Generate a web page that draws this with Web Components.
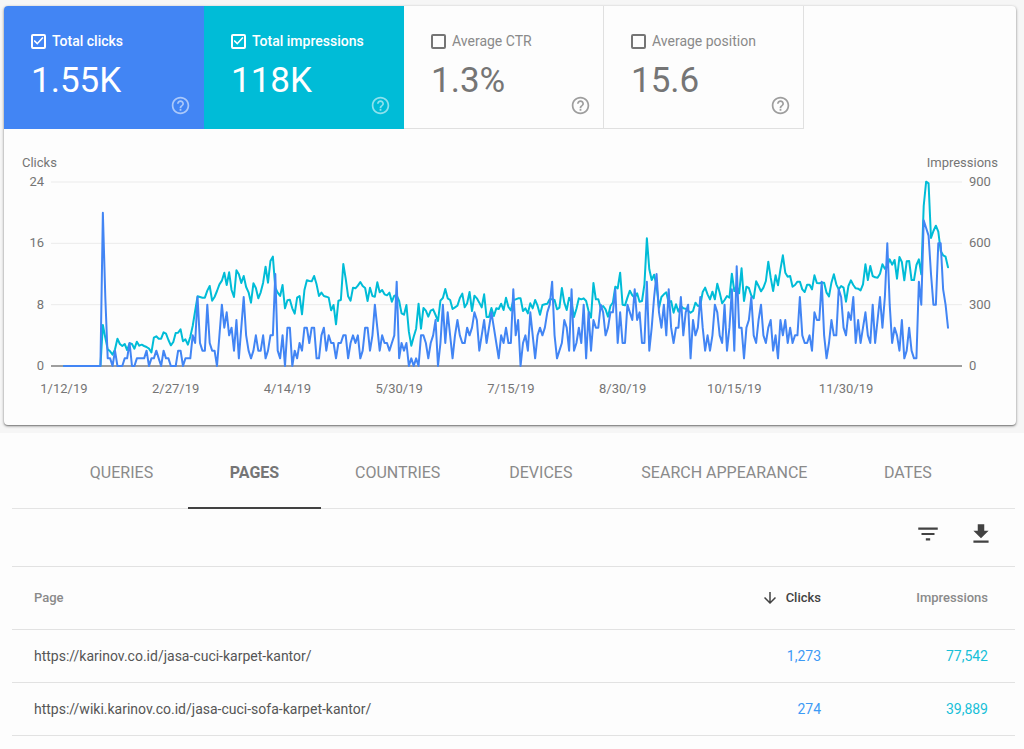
<!DOCTYPE html>
<html lang="en">
<head>
<meta charset="utf-8">
<meta name="viewport" content="width=device-width, initial-scale=1">
<title>Performance on Search results</title>
<style>
  body { margin: 0; background: #fdfdfd; color: #757575; font-family: Roboto, "Liberation Sans", sans-serif; }
</style>
</head>
<body>
<performance-page></performance-page>

<template id="t-metric">
  <style>
    :host { display: block; box-sizing: border-box; position: relative; height: 123px; padding: 25px 12px 0 27px;
      color: #757575; border: solid #e0e0e0; border-width: 0 1px 1px 0; --label: #8a8a8a; --help: #9e9e9e; --weight: 400; }
    :host([tone]) { color: #fff; --label: #fff; --help: rgba(255,255,255,.55); --weight: 500; }
    :host([tone="clicks"]) { background: #4285f4; border-color: #4285f4; }
    :host([tone="impressions"]) { background: #00bcd7; border-color: #00bcd7; }
    label { display: flex; align-items: center; gap: 6px; height: 20px; font-size: 14px; line-height: 20px; font-weight: var(--weight); color: var(--label); }
    input { appearance: none; box-sizing: border-box; width: 15px; height: 15px; margin: 0; border: 2px solid #757575; border-radius: 2px; display: grid; place-items: center; }
    :host([tone]) input { border-color: #fff; }
    input:checked::before { content: ""; width: 10px; height: 8px; background: #fff;
      clip-path: polygon(0 50%, 12% 36%, 38% 68%, 88% 0, 100% 14%, 38% 98%); }
    .value { display: block; margin-top: 8px; font-size: 35px; line-height: 44px; }
    button { position: absolute; right: 12px; bottom: 12px; width: 21px; height: 21px; padding: 0; border: 0; background: none; color: var(--help); }
    svg { display: block; width: 21px; height: 21px; fill: currentColor; }
  </style>
  <label><input type="checkbox"><span><slot name="label"></slot></span></label>
  <span class="value"><slot></slot></span>
  <button type="button" aria-label="Help"><svg viewBox="0 0 24 24"><path d="M11 18h2v-2h-2v2zm1-16C6.480 2 2 6.480 2 12s4.480 10 10 10 10-4.480 10-10S17.520 2 12 2zm0 18c-4.410 0-8-3.590-8-8s3.590-8 8-8 8 3.590 8 8-3.590 8-8 8zm0-14c-2.210 0-4 1.790-4 4h2c0-1.100.9-2 2-2s2 .9 2 2c0 2-3 1.750-3 5h2c0-2.250 3-2.500 3-5 0-2.210-1.790-4-4-4z"/></svg></button>
</template>

<template id="t-chart">
  <style>
    :host { display: block; padding: 26px 0 28px; font-size: 13px; line-height: 16px; }
    .titles { display: flex; justify-content: space-between; padding: 0 18px; }
    .plot { display: grid; grid-template-columns: 40px 1fr 47px; gap: 7px; margin-top: 3px; }
    .axis { display: flex; flex-direction: column; justify-content: space-between; height: 200px; }
    .left { text-align: right; }
    svg { display: block; width: 100%; height: 184px; margin-top: 8px; overflow: visible; }
    svg * { vector-effect: non-scaling-stroke; fill: none; }
    .grid { stroke: #ebebeb; stroke-width: 1px; }
    .base { stroke: #9e9e9e; stroke-width: 2px; }
    .series { stroke-width: 2px; stroke-linejoin: round; stroke-linecap: round; }
    .dates { display: grid; grid-template-columns: repeat(8, 1fr); margin: 7px 114px 0 4px; text-align: center; }
  </style>
  <div class="titles"><span>Clicks</span><span>Impressions</span></div>
  <div class="plot">
    <div class="axis left"><span>24</span><span>16</span><span>8</span><span>0</span></div>
    <svg viewBox="0 0 2733 552" preserveAspectRatio="none" role="img" aria-label="Clicks and impressions per day">
      <path class="grid" d="M0 0H2733M0 184H2733M0 368H2733"/>
      <path class="base" d="M0 552H2733"/>
      <polyline class="series" id="impressions" stroke="#00bcd7"/>
      <polyline class="series" id="clicks" stroke="#4285f4"/>
    </svg>
    <div class="axis"><span>900</span><span>600</span><span>300</span><span>0</span></div>
  </div>
  <div class="dates"></div>
</template>

<template id="t-tabs">
  <style>
    :host { display: block; margin: 0 9px 0 12px; border-bottom: 1px solid #e4e4e4; padding-left: 43px; }
    div { display: flex; }
    button { box-sizing: border-box; height: 76px; min-width: 133px; padding: 6px 34px 0; margin-bottom: -1px; border: 0; border-bottom: 2px solid transparent;
      background: none; font: 400 16px/20px Roboto, "Liberation Sans", sans-serif; color: #8a8a8a; white-space: nowrap; }
    button[aria-selected="true"] { font-weight: 700; color: #757575; border-color: #424242; }
  </style>
  <div role="tablist"></div>
</template>

<template id="t-toolbar">
  <style>
    :host { display: flex; justify-content: flex-end; align-items: center; gap: 27px; height: 57px; box-sizing: border-box; margin: 0 9px 0 12px; padding: 0 21px 8px; }
    button { width: 26px; height: 26px; padding: 0; border: 0; background: none; color: #424242; }
    svg { display: block; width: 26px; height: 26px; fill: currentColor; }
  </style>
  <button type="button" aria-label="Filter rows"><svg viewBox="0 0 24 24"><path d="M10 18h4v-2h-4v2zM3 6v2h18V6H3zm3 7h12v-2H6v2z"/></svg></button>
  <button type="button" aria-label="Download"><svg viewBox="0 0 24 24"><path d="M19 9h-4V3H9v6H5l7 7 7-7zM5 18v2h14v-2H5z"/></svg></button>
</template>

<template id="t-table">
  <style>
    :host { display: block; margin: 0 9px 0 12px; }
    table { width: 100%; border-collapse: collapse; font-size: 14px; line-height: 20px; table-layout: fixed; }
    tr { border: solid #e2e2e2; border-width: 1px 0; }
    th, td { padding: 0 27px 0 22px; text-align: right; font-weight: 400; box-sizing: border-box; }
    th { height: 63px; font-size: 13px; font-weight: 500; color: #8a8a8a; }
    td { height: 53px; }
    th:first-child, td:first-child { text-align: left; }
    col.clicks { width: 186px; } col.impressions { width: 167px; }
    button { display: inline-flex; align-items: center; gap: 7px; padding: 0; border: 0; background: none; font: inherit; color: #424242; vertical-align: middle; }
    svg { width: 18px; height: 18px; fill: currentColor; }
    a { color: #555; text-decoration: none; }
    .c { color: #3d9af5; } .i { color: #17c0d8; }
  </style>
  <table>
    <colgroup><col><col class="clicks"><col class="impressions"></colgroup>
    <thead><tr><th scope="col">Page</th>
      <th scope="col" aria-sort="descending"><button type="button"><svg viewBox="0 0 24 24" aria-hidden="true"><path d="M20 12l-1.410-1.410L13 16.170V4h-2v12.170l-5.580-5.590L4 12l8 8 8-8z"/></svg>Clicks</button></th>
      <th scope="col">Impressions</th></tr></thead>
    <tbody></tbody>
  </table>
</template>

<template id="t-page">
  <style>
    :host { display: block; }
    .band { background: #f6f6f6; padding: 6px 8px 8px 4px; }
    .card { background: #fdfdfd; border-radius: 4px; box-shadow: 0 1px 3px rgba(0,0,0,.45), 0 1px 1px rgba(0,0,0,.2); overflow: hidden; }
    .metrics { display: grid; grid-template-columns: repeat(4, minmax(0, 200px)); }
  </style>
  <div class="band">
    <div class="card">
      <div class="metrics">
        <metric-tile tone="clicks" checked><span slot="label">Total clicks</span>1.55K</metric-tile>
        <metric-tile tone="impressions" checked><span slot="label">Total impressions</span>118K</metric-tile>
        <metric-tile><span slot="label">Average CTR</span>1.3%</metric-tile>
        <metric-tile><span slot="label">Average position</span>15.6</metric-tile>
      </div>
      <trend-chart></trend-chart>
    </div>
  </div>
  <dimension-tabs></dimension-tabs>
  <table-toolbar></table-toolbar>
  <results-table></results-table>
</template>

<script>
  // Clicks per day.
  const CLICKS = [
    0,0,0,0,0,0,0,0,0,0,0,0,0,0,0,0,20,9,1,1,0,2,0,0,0,1,1,3,0,0,1,1,1,1,2,0,1,1,2,1,
    0,2,1,1,0,0,0,2,2,0,1,1,1,4,3,9,3,2,2,8,3,2,2,0,4,8,5,7,4,5,2,6,1,5,9,4,2,1,2,4,
    2,2,4,1,2,4,4,12,2,1,4,0,5,5,0,2,1,3,2,5,5,3,5,5,1,1,4,5,2,4,3,3,1,3,3,4,4,1,3,4,
    3,4,1,2,5,5,2,4,8,5,2,4,3,3,2,3,4,11,1,3,2,3,0,1,0,1,0,4,4,3,1,3,4,6,0,3,8,3,7,4,
    1,4,6,4,3,3,5,4,5,7,6,2,4,6,3,5,7,5,3,1,4,3,5,3,3,10,4,6,0,3,4,2,7,4,1,4,5,4,5,7,
    8,11,4,1,2,3,6,5,2,10,2,3,5,3,8,1,7,2,6,5,5,8,7,4,5,7,7,10,3,7,3,3,8,7,6,10,6,7,3,3,
    11,2,5,9,12,7,5,8,4,10,5,3,5,5,9,4,7,8,1,6,4,5,9,5,2,4,2,4,8,7,4,3,8,2,5,10,2,13,5,5,
    1,5,6,9,4,3,6,8,4,3,5,6,2,4,1,6,4,6,3,5,3,4,4,9,4,3,3,4,2,7,6,6,11,4,1,3,6,4,4,10,
    9,5,4,7,6,9,3,6,3,5,7,4,3,8,3,6,9,5,9,16,8,3,5,4,2,6,1,2,5,2,1,1,11,8,19,18,17,12,8,8,
    16,16,10,8,5];
  // Impressions per day, as heights on the 552-unit plot (552 = 900 impressions).
  const IMPRESSIONS = [
    0,0,0,0,0,0,0,0,0,0,0,0,0,0,0,0,123,85,50,44,34,50,82,66,60,66,48,68,66,52,73,61,64,60,57,52,41,85,89,82,
    82,101,97,78,62,72,99,100,110,74,80,64,88,120,165,209,207,205,205,226,240,196,207,225,245,256,280,243,281,228,207,287,275,249,270,237,221,190,248,234,
    203,221,250,298,250,315,328,235,220,210,243,173,197,199,173,157,205,210,155,228,257,255,254,270,245,210,220,210,208,205,167,183,125,196,198,306,262,209,196,235,
    233,241,252,240,234,195,235,210,208,251,221,228,215,212,220,193,211,212,195,158,154,183,103,61,88,112,187,112,174,166,148,166,170,153,135,196,204,231,203,198,
    171,176,181,204,217,176,188,222,165,211,203,190,176,215,147,147,174,150,173,171,187,168,205,177,167,197,200,203,203,165,173,158,188,173,198,181,154,183,185,187,
    200,200,198,170,175,234,190,168,205,190,147,172,203,200,203,195,165,145,249,200,200,175,180,170,148,180,190,238,233,280,184,182,205,226,212,205,218,193,195,245,
    383,290,258,274,240,175,207,215,221,190,195,160,185,163,180,173,172,166,160,165,190,180,182,222,235,215,200,223,200,247,220,188,198,210,205,277,225,240,218,293,
    195,238,234,212,203,254,240,224,235,255,313,265,225,272,242,290,332,280,268,270,238,243,253,253,230,222,244,244,230,272,249,248,250,250,220,209,250,275,245,230,
    240,235,193,240,257,243,233,232,227,245,305,258,300,270,266,265,277,305,292,300,320,304,318,262,327,312,257,314,315,258,258,303,320,275,480,553,548,384,405,421,
    403,345,332,328,296];
  const DATES = ["1/12/19","2/27/19","4/14/19","5/30/19","7/15/19","8/30/19","10/15/19","11/30/19"];
  const TABS = ["QUERIES","PAGES","COUNTRIES","DEVICES","SEARCH APPEARANCE","DATES"];
  const ROWS = [
    ["https://karinov.co.id/jasa-cuci-karpet-kantor/", "1,273", "77,542"],
    ["https://wiki.karinov.co.id/jasa-cuci-sofa-karpet-kantor/", "274", "39,889"]
  ];

  class TemplateElement extends HTMLElement {
    constructor() {
      super();
      const t = document.getElementById(this.constructor.template);
      this.attachShadow({ mode: "open" }).append(t.content.cloneNode(true));
    }
    $(selector) { return this.shadowRoot.querySelector(selector); }
  }

  customElements.define("metric-tile", class extends TemplateElement {
    static template = "t-metric";
    connectedCallback() { this.$("input").checked = this.hasAttribute("checked"); }
  });

  customElements.define("trend-chart", class extends TemplateElement {
    static template = "t-chart";
    connectedCallback() {
      const step = 2652 / (CLICKS.length - 1);
      const points = heights => heights.map((h, i) => `${(39 + i * step).toFixed(1)},${552 - h}`).join(" ");
      this.$("#clicks").setAttribute("points", points(CLICKS.map(c => c * 23)));
      this.$("#impressions").setAttribute("points", points(IMPRESSIONS));
      this.$(".dates").innerHTML = DATES.map(d => `<span>${d}</span>`).join("");
    }
  });

  customElements.define("dimension-tabs", class extends TemplateElement {
    static template = "t-tabs";
    connectedCallback() {
      this.$("div").innerHTML = TABS.map(t => `<button type="button" role="tab" aria-selected="${t === "PAGES"}">${t}</button>`).join("");
      this.$("div").addEventListener("click", e => {
        if (e.target.role !== "tab") return;
        for (const tab of this.shadowRoot.querySelectorAll("button")) tab.setAttribute("aria-selected", tab === e.target);
      });
    }
  });

  customElements.define("table-toolbar", class extends TemplateElement {
    static template = "t-toolbar";
  });

  customElements.define("results-table", class extends TemplateElement {
    static template = "t-table";
    connectedCallback() {
      this.$("tbody").innerHTML = ROWS.map(([url, c, i]) =>
        `<tr><td><a href="${url}">${url}</a></td><td class="c">${c}</td><td class="i">${i}</td></tr>`).join("");
    }
  });

  customElements.define("performance-page", class extends TemplateElement {
    static template = "t-page";
  });
</script>
</body>
</html>
